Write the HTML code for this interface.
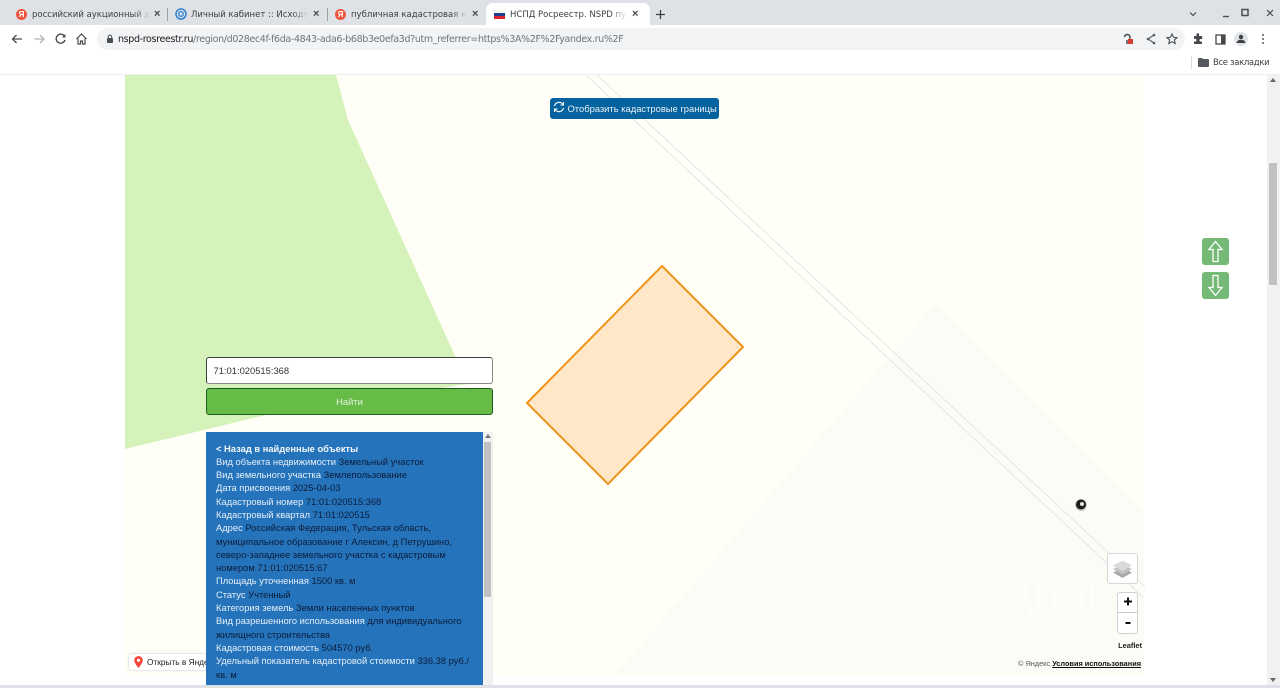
<!DOCTYPE html>
<html lang="ru"><head><meta charset="utf-8"><title>НСПД Росреестр</title>
<style>
html,body{margin:0;padding:0;width:1280px;height:688px;overflow:hidden;background:#fff;font-family:"Liberation Sans","Noto Sans CJK SC",sans-serif}
.a{position:absolute;white-space:nowrap}
.tt{font:8.5px/12px "DejaVu Sans",sans-serif;color:#3c4043;top:9px;overflow:hidden;-webkit-mask-image:linear-gradient(to right,#000 86%,transparent);mask-image:linear-gradient(to right,#000 86%,transparent)}
.x{font:bold 11px/12px "Liberation Sans",sans-serif;color:#45484c;top:8px}
#info{left:216px;top:442.500px;width:264px;font-size:9.350px;line-height:13.300px;color:#0b1c3a;white-space:normal}
#info i{font-style:normal;color:#e6eef8}
#info b{color:#f4f8fc}
</style></head><body>

<div class="a" style="left:0;top:0;width:1280px;height:25px;background:#dee1e6"></div>
<div class="a" style="left:486px;top:3px;width:164px;height:22px;background:#fff;border-radius:7px 7px 0 0"></div>
<div class="a" style="left:167px;top:8px;width:1px;height:13px;background:#9aa0a6"></div>
<div class="a" style="left:327px;top:8px;width:1px;height:13px;background:#9aa0a6"></div>

<div class="a" style="left:16px;top:9px;width:11px;height:11px;border-radius:50%;background:#f0563f;color:#fff;font:bold 8px/11px 'Liberation Sans';text-align:center">Я</div>
<div class="a tt" style="left:32px;width:118px">российский аукционный дом</div>
<div class="a x" style="left:154px">×</div>
<svg class="a" style="left:175px;top:8px" width="12" height="12" viewBox="0 0 12 12"><circle cx="6" cy="6" r="5" fill="none" stroke="#2f80d0" stroke-width="1.500"/><circle cx="6" cy="6" r="2.300" fill="none" stroke="#2f80d0" stroke-width="1.300"/></svg>
<div class="a tt" style="left:191px;width:117px">Личный кабинет :: Исходящие</div>
<div class="a x" style="left:313px">×</div>
<div class="a" style="left:335px;top:9px;width:11px;height:11px;border-radius:50%;background:#f0563f;color:#fff;font:bold 8px/11px 'Liberation Sans';text-align:center">Я</div>
<div class="a tt" style="left:351px;width:116px">публичная кадастровая карта</div>
<div class="a x" style="left:472px">×</div>
<svg class="a" style="left:494px;top:10px" width="11" height="9" viewBox="0 0 11 9"><rect width="11" height="3" fill="#f4f4f4"/><rect y="3" width="11" height="3" fill="#1c3f94"/><rect y="6" width="11" height="3" fill="#d8232a"/></svg>
<div class="a tt" style="left:510px;width:117px">НСПД Росреестр. NSPD публичная</div>
<div class="a x" style="left:632px">×</div>
<svg class="a" style="left:655px;top:9px" width="11" height="11" viewBox="0 0 11 11"><path d="M5.500 1v9M1 5.500h9" stroke="#3c4043" stroke-width="1.300"/></svg>

<svg class="a" style="left:1186px;top:8px" width="90" height="12" viewBox="0 0 90 12" fill="none" stroke="#4a4d51"><path d="M4 4.500l3 3 3-3" stroke-width="1.200"/><path d="M37 8.500h6" stroke-width="1.400"/><rect x="56" y="1.500" width="6" height="6" stroke-width="1.500"/><path d="M81 2l6 6M87 2l-6 6" stroke-width="1.200"/></svg>

<div class="a" style="left:0;top:25px;width:1280px;height:25px;background:#fff"></div>
<svg class="a" style="left:10px;top:32px" width="80" height="14" viewBox="0 0 80 14" fill="none"><path d="M12 7H2.500M6.500 3l-4 4 4 4" stroke="#484b4f" stroke-width="1.300"/><path d="M34 7h-9.500M30 3l4 4-4 4" stroke="#b3b5b8" stroke-width="1.300"/><path d="M54.500 4.300A4.500 4.500 0 1 0 55 8" stroke="#484b4f" stroke-width="1.400"/><path d="M55.500 2v3.500H52z" fill="#484b4f"/><path d="M66.500 7l5-5 5 5M68 6.500V12h2.500V9h2v3H75V6.500" stroke="#484b4f" stroke-width="1.200"/></svg>
<div class="a" style="left:97px;top:28px;width:1088px;height:22px;border-radius:11px;background:#f1f3f4"></div>
<svg class="a" style="left:106px;top:34px" width="8" height="10" viewBox="0 0 8 10"><rect x="1" y="4" width="6" height="5" rx="1" fill="#4a4d51"/><path d="M2.300 4V2.800a1.700 1.700 0 0 1 3.400 0V4" fill="none" stroke="#4a4d51"/></svg>
<div class="a" style="left:118px;top:33px;font:9.500px/14px 'DejaVu Sans',sans-serif;letter-spacing:-.35px;color:#70757a"><span style="color:#202124">nspd-rosreestr.ru</span>/region/d028ec4f-f6da-4843-ada6-b68b3e0efa3d?utm_referrer=https%3A%2F%2Fyandex.ru%2F</div>
<svg class="a" style="left:1122px;top:31px" width="150" height="16" viewBox="0 0 150 16" fill="none">
<path d="M5 13V9M2.500 6a2.800 2.800 0 1 1 5 2" stroke="#4a4d51" stroke-width="1.500"/><rect x="6" y="8" width="5" height="5" fill="#d93a32"/>
<path d="M32 4l-6 4 6 4" stroke="#55585c" stroke-width="1.100"/><circle cx="32" cy="4" r="1.300" fill="#55585c"/><circle cx="26" cy="8" r="1.300" fill="#55585c"/><circle cx="32" cy="12" r="1.300" fill="#55585c"/>
<path d="M50 3l1.500 3.300 3.500.4-2.600 2.300.8 3.500-3.200-1.800-3.200 1.800.8-3.500L45 6.700l3.500-.4z" stroke="#4a4d51" stroke-width="1.100"/>
<path d="M72 5h2.500V3.500a1.300 1.300 0 0 1 2.600 0V5h3v3h-1.300a1.300 1.300 0 0 0 0 2.600H80V13h-8V10.500h1.200a1.300 1.300 0 0 0 0-2.600H72z" fill="#45484c"/>
<rect x="94" y="4" width="9" height="9" stroke="#45484c" stroke-width="1.300"/><rect x="99" y="4" width="4" height="9" fill="#45484c"/>
<circle cx="119" cy="8" r="7" fill="#dfe3e8"/><circle cx="119" cy="6" r="2.200" fill="#3f4347"/><path d="M114.500 12c.5-2.500 2.500-3.200 4.500-3.200s4 .7 4.500 3.200z" fill="#3f4347"/>
<circle cx="141" cy="4" r="1" fill="#55585c"/><circle cx="141" cy="8" r="1" fill="#55585c"/><circle cx="141" cy="12" r="1" fill="#55585c"/></svg>

<div class="a" style="left:1191px;top:56px;width:1px;height:13px;background:#dadce0"></div>
<svg class="a" style="left:1198px;top:58px" width="11" height="9" viewBox="0 0 11 9"><path d="M0 1a1 1 0 0 1 1-1h3l1 1h5a1 1 0 0 1 1 1v6a1 1 0 0 1-1 1H1a1 1 0 0 1-1-1z" fill="#55585c"/></svg>
<div class="a" style="left:1213px;top:57px;font:8.500px/12px 'DejaVu Sans',sans-serif;letter-spacing:-.35px;color:#3c4043">Все закладки</div>
<div class="a" style="left:0;top:74px;width:1280px;height:1px;background:#eceef0"></div>

<svg class="a" style="left:0;top:75px" width="1267" height="613" viewBox="0 75 1267 613">
<rect x="125" y="75" width="1019" height="600" fill="#fffff8"/>
<path d="M935 304L1144 510V675H615z" fill="#fcfcf7"/>
<path d="M125 75H336L348 120L456 358L468 384L270 414L125 449z" fill="#d4f2b9"/>
<path d="M586 75L1143 597M597 75L1145 587" stroke="#e2e2e8" stroke-width=".9" fill="none"/>
<path d="M662 266L743 347L608 484L527 403z" fill="#ffe7c7" stroke="#f09418" stroke-width="2"/>
<circle cx="1081" cy="505" r="6" fill="#c9c9c9"/><circle cx="1081" cy="504.500" r="5" fill="#1d1d1d"/><circle cx="1082" cy="504" r="2" fill="#e8e8e8"/>
<text x="1005" y="607" font-family="Liberation Sans" font-size="48" fill="#fdfdf9">циан</text>
<path d="M955 598L1000 552M1020 598L975 552" stroke="#fdfdf9" stroke-width="4"/><circle cx="982" cy="549" r="6" fill="none" stroke="#fdfdf9" stroke-width="3"/>
</svg>

<div class="a" style="left:550px;top:98px;width:169px;height:21px;border-radius:3px;background:#04629e;color:#e9f2f8;font-size:9.400px;line-height:22px;text-indent:17.500px">Отобразить кадастровые границы</div>
<svg class="a" style="left:553px;top:101px" width="12" height="12" viewBox="0 0 12 12" fill="none" stroke="#fff" stroke-width="1.100"><path d="M1.500 5A4.700 4.700 0 0 1 10 3.500M10.500 7A4.700 4.700 0 0 1 2 8.500"/><path d="M10.500 1v3H7.500M1.500 11V8h3"/></svg>

<div class="a" style="left:206px;top:357px;width:287px;height:27px;box-sizing:border-box;background:#fff;border:1.500px solid #3a3f3a;border-bottom-color:#8a8a8a;border-right-color:#8a8a8a;border-radius:3px;font-size:9.400px;line-height:25px;text-indent:6.500px;color:#333">71:01:020515:368</div>
<div class="a" style="left:206px;top:388px;width:287px;height:27px;box-sizing:border-box;background:#67bc47;border:1.500px solid #1f5a1f;border-radius:3px;font-size:9.400px;line-height:25px;text-align:center;color:#e3f3dc">Найти</div>

<div class="a" style="left:129px;top:654px;width:90px;height:16px;background:#fff;border-radius:3px;box-shadow:0 0 2px #bbb;font-size:8.300px;line-height:16px;color:#222;text-indent:18px;overflow:hidden">Открыть в Яндекс</div>
<svg class="a" style="left:134px;top:656px" width="9" height="12" viewBox="0 0 9 12"><path d="M4.500 0a4.300 4.300 0 0 1 4.300 4.300C8.800 7 4.500 12 4.500 12S.2 7 .2 4.300A4.300 4.300 0 0 1 4.500 0z" fill="#f4463a"/><circle cx="4.500" cy="4.300" r="1.600" fill="#fff"/></svg>

<div class="a" style="left:206px;top:432px;width:277px;height:253px;background:#2574bb"></div>
<div class="a" style="left:483px;top:432px;width:10px;height:253px;background:#f1f1f1"></div>
<div class="a" style="left:484px;top:442px;width:7px;height:155px;background:#c1c1c1"></div>
<div class="a" style="left:485px;top:434px;border:3px solid transparent;border-bottom:4px solid #777;border-top:0"></div>
<div class="a" id="info"><b>&lt; Назад в найденные объекты</b><br>
<i>Вид объекта недвижимости</i> Земельный участок<br>
<i>Вид земельного участка</i> Землепользование<br>
<i>Дата присвоения</i> 2025-04-03<br>
<i>Кадастровый номер</i> 71:01:020515:368<br>
<i>Кадастровый квартал</i> 71:01:020515<br>
<i>Адрес</i> Российская Федерация, Тульская область,<br>муниципальное образование г Алексин, д Петрушино,<br>северо-западнее земельного участка с кадастровым<br>номером 71:01:020515:67<br>
<i>Площадь уточненная</i> 1500 кв. м<br>
<i>Статус</i> Учтенный<br>
<i>Категория земель</i> Земли населенных пунктов<br>
<i>Вид разрешенного использования</i> для индивидуального<br>жилищного строительства<br>
<i>Кадастровая стоимость</i> 504570 руб.<br>
<i>Удельный показатель кадастровой стоимости</i> 336.38 руб./<br>кв. м</div>

<div class="a" style="left:1107px;top:553px;width:29px;height:29px;background:#fff;border:1.500px solid #d6d6d6;border-radius:3px"></div>
<svg class="a" style="left:1112px;top:559px" width="21" height="20" viewBox="0 0 21 20"><path d="M10.500 9L20 13.500 10.500 19 1 13.500z" fill="#a9a9a9"/><path d="M10.500 5.500L20 10 10.500 15.500 1 10z" fill="#c2c2c2"/><path d="M10.500 1.500L20 6.500 10.500 12 1 6.500z" fill="#d9d9d9"/></svg>
<div class="a" style="left:1117px;top:592px;width:19px;height:40px;background:#fff;border:1.500px solid #d2d2d2;border-radius:3px"></div>
<div class="a" style="left:1118px;top:612px;width:19px;height:1px;background:#ccc"></div>
<svg class="a" style="left:1122px;top:596px" width="12" height="32" viewBox="0 0 12 32"><path d="M6 1.500v8M2 5.500h8M3.500 27h5" stroke="#111" stroke-width="2"/></svg>
<div class="a" style="right:138px;top:641px;font:bold 7.400px/10px 'Liberation Sans',sans-serif;color:#222">Leaflet</div>
<div class="a" style="right:139px;top:659px;font-size:7.350px;line-height:10px;color:#555">© Яндекс <b style="color:#111;text-decoration:underline;font-weight:bold">Условия использования</b></div>

<div class="a" style="left:1202px;top:238px;width:27px;height:27px;background:#74b976;border-radius:3px"></div>
<div class="a" style="left:1202px;top:272px;width:27px;height:27px;background:#74b976;border-radius:3px"></div>
<svg class="a" style="left:1202px;top:238px" width="27" height="61" viewBox="0 0 27 61" fill="none" stroke="#fff" stroke-width="1.300"><path d="M13.500 3.500L20 11.500H16V23.500H11V11.500H7z"/><path d="M13.500 57.500L20 49.500H16V37.500H11V49.500H7z"/></svg>

<div class="a" style="left:1267px;top:75px;width:13px;height:610px;background:#f1f1f1"></div>
<div class="a" style="left:1269px;top:163px;width:8px;height:122px;background:#c1c1c1"></div>
<div class="a" style="left:1270px;top:78px;border:3px solid transparent;border-bottom:4px solid #666;border-top:0"></div>
<div class="a" style="left:1270px;top:678px;border:3px solid transparent;border-top:4px solid #666;border-bottom:0"></div>
<div class="a" style="left:0;top:685px;width:1280px;height:3px;background:#dee1e6"></div>
</body></html>
